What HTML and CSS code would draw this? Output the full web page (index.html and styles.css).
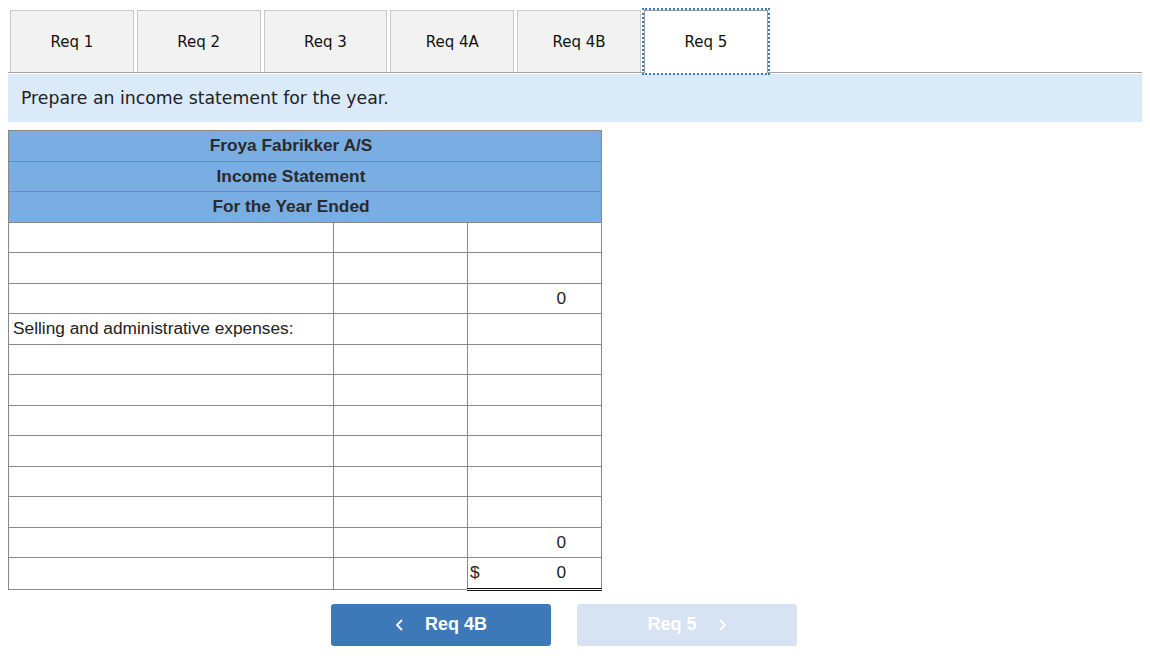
FILE: index.html
```html
<!DOCTYPE html>
<html lang="en">
<head>
    <meta charset="UTF-8">
    <title>Req 5</title>
    <link rel="stylesheet" href="styles.css">
</head>
<body>
    <div class="tabs">
        <div class="tab">Req 1</div>
        <div class="tab">Req 2</div>
        <div class="tab">Req 3</div>
        <div class="tab">Req 4A</div>
        <div class="tab">Req 4B</div>
        <div class="tab active">Req 5</div>
    </div>

    <div class="question">Prepare an income statement for the year.</div>

    <table class="statement">
        <colgroup>
            <col class="col-label">
            <col class="col-amount">
            <col class="col-amount">
        </colgroup>
        <tr class="head"><td colspan="3">Froya Fabrikker A/S</td></tr>
        <tr class="head"><td colspan="3">Income Statement</td></tr>
        <tr class="head"><td colspan="3">For the Year Ended</td></tr>
        <tr><td class="label"></td><td></td><td></td></tr>
        <tr><td class="label"></td><td></td><td></td></tr>
        <tr><td class="label"></td><td></td><td class="num subtotal">0</td></tr>
        <tr><td class="label">Selling and administrative expenses:</td><td></td><td></td></tr>
        <tr><td class="label"></td><td></td><td></td></tr>
        <tr><td class="label"></td><td></td><td></td></tr>
        <tr><td class="label"></td><td></td><td></td></tr>
        <tr><td class="label"></td><td></td><td></td></tr>
        <tr><td class="label"></td><td></td><td></td></tr>
        <tr><td class="label"></td><td></td><td></td></tr>
        <tr><td class="label"></td><td></td><td class="num">0</td></tr>
        <tr><td class="label"></td><td></td><td class="num total"><span class="dollar">$</span>0</td></tr>
    </table>

    <div class="nav">
        <button class="nav-btn prev">
            <svg width="10" height="14" viewBox="0 0 10 14"><path d="M7 2 L2 7 L7 12" fill="none" stroke="#fff" stroke-width="1.8"/></svg>
            <span>Req 4B</span>
        </button>
        <button class="nav-btn next" disabled>
            <span>Req 5</span>
            <svg width="10" height="14" viewBox="0 0 10 14"><path d="M3 2 L8 7 L3 12" fill="none" stroke="#fff" stroke-width="1.8"/></svg>
        </button>
    </div>
</body>
</html>
```

FILE: styles.css
```css
body {
    margin: 8px;
    font-family: 'Liberation Sans', Arial, sans-serif;
    background: #fff;
    color: #222;
}

.tabs {
    display: flex;
    gap: 3px;
    padding: 2px 0 0 2px;
    border-bottom: 1px solid #a3a3a3;
    height: 62px;
}

.tab {
    box-sizing: border-box;
    width: 123.8px;
    height: 62px;
    background: #f2f2f2;
    border: 1px solid #c8c8c8;
    border-bottom: none;
    display: flex;
    align-items: center;
    justify-content: center;
    font-family: 'DejaVu Sans', Verdana, sans-serif;
    font-size: 15px;
    color: #111;
}

.tab.active {
    width: 124px;
    height: 63px;
    background: #fff;
    border: 1px solid #999;
    border-bottom: none;
    outline: 2px dotted #3d79b8;
    position: relative;
    z-index: 1;
}

.question {
    margin-top: 1px;
    height: 48px;
    background: #dbeaf8;
    display: flex;
    align-items: center;
    padding-left: 13px;
    font-family: 'DejaVu Sans', Verdana, sans-serif;
    font-size: 17.3px;
    color: #222;
}

.statement {
    margin-top: 8px;
    width: 593px;
    table-layout: fixed;
    border-collapse: collapse;
    border: 1px solid #777;
    font-size: 17.3px;
}

.col-label { width: 325px; }
.col-amount { width: 134px; }

.statement td {
    border: 1px solid #888;
    height: 29.5px;
    padding: 0 4px;
    white-space: nowrap;
}

.statement .head td {
    background: #7aaee3;
    text-align: center;
    font-weight: bold;
    color: #2a2a2a;
    padding-right: 32px;
}

.statement .num {
    text-align: right;
    padding-right: 35px;
}

.statement .subtotal {
    border-top: 1px solid #111;
}

.statement .total {
    border-top: 1px solid #111;
    border-bottom: 3px double #111;
    position: relative;
}

.dollar {
    position: absolute;
    left: 2px;
}

.nav {
    display: flex;
    gap: 26px;
    margin: 13px 0 0 323px;
}

.nav-btn {
    width: 220px;
    height: 42px;
    border: none;
    border-radius: 3px;
    display: flex;
    align-items: center;
    justify-content: center;
    gap: 20px;
    font-family: 'Liberation Sans', Arial, sans-serif;
    font-size: 18px;
    font-weight: bold;
    color: #fff;
}

.prev {
    background: #3d79b8;
}

.next {
    background: #d7e3f2;
}
```
